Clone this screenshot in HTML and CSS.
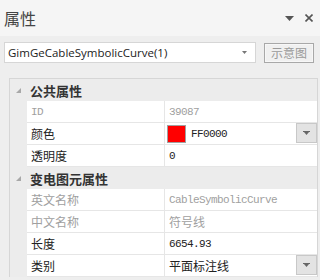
FILE: index.html
```html
<!DOCTYPE html>
<html lang="zh">
<head>
  <meta charset="UTF-8">
  <title>属性</title>
  <link rel="stylesheet" href="styles.css">
</head>
<body>
  <div class="panel">
    <!-- 标题栏 -->
    <div class="header">
      <span class="title">属性</span>
      <div class="header-tools">
        <svg class="pin" width="9" height="5" viewBox="0 0 9 5"><polygon points="0,0 9,0 4.5,5" fill="#555"/></svg>
        <svg class="close" width="8" height="8" viewBox="0 0 8 8"><path d="M0.5 0.5 L7.5 7.5 M7.5 0.5 L0.5 7.5" stroke="#555" stroke-width="1.6"/></svg>
      </div>
    </div>

    <!-- 对象选择 -->
    <div class="toolbar">
      <div class="combo">
        <span>GimGeCableSymbolicCurve(1)</span>
        <svg width="5" height="3" viewBox="0 0 5 3"><polygon points="0,0 5,0 2.5,3" fill="#777"/></svg>
      </div>
      <button class="btn-diagram" disabled>示意图</button>
    </div>

    <!-- 属性表格 -->
    <div class="grid">
      <div class="cat">
        <span class="toggle"><svg width="5" height="5" viewBox="0 0 5 5"><polygon points="5,0 5,5 0,5" fill="#a8a8a8"/></svg></span>
        <span class="cat-name">公共属性</span>
      </div>
      <div class="row readonly">
        <span class="gutter"></span>
        <span class="label mono">ID</span>
        <span class="value mono">39087</span>
      </div>
      <div class="row">
        <span class="gutter"></span>
        <span class="label">颜色</span>
        <span class="value">
          <span class="swatch"></span>
          <span class="mono">FF0000</span>
          <span class="drop"><svg width="7" height="4" viewBox="0 0 7 4"><rect x="0" y="0" width="7" height="1" fill="#666"/><polygon points="1,1 6,1 3.5,4" fill="#666"/></svg></span>
        </span>
      </div>
      <div class="row">
        <span class="gutter"></span>
        <span class="label">透明度</span>
        <span class="value mono">0</span>
      </div>
      <div class="cat">
        <span class="toggle"><svg width="5" height="5" viewBox="0 0 5 5"><polygon points="5,0 5,5 0,5" fill="#a8a8a8"/></svg></span>
        <span class="cat-name">变电图元属性</span>
      </div>
      <div class="row readonly">
        <span class="gutter"></span>
        <span class="label">英文名称</span>
        <span class="value mono">CableSymbolicCurve</span>
      </div>
      <div class="row readonly">
        <span class="gutter"></span>
        <span class="label">中文名称</span>
        <span class="value">符号线</span>
      </div>
      <div class="row">
        <span class="gutter"></span>
        <span class="label">长度</span>
        <span class="value mono">6654.93</span>
      </div>
      <div class="row">
        <span class="gutter"></span>
        <span class="label">类别</span>
        <span class="value">
          平面标注线
          <span class="drop"><svg width="7" height="4" viewBox="0 0 7 4"><rect x="0" y="0" width="7" height="1" fill="#666"/><polygon points="1,1 6,1 3.5,4" fill="#666"/></svg></span>
        </span>
      </div>
    </div>
  </div>
</body>
</html>
```
FILE: styles.css
```css
body {
  margin: 0;
  background: #eeeeee;
  font-family: "Noto Sans CJK SC", sans-serif;
  font-size: 12px;
  color: #333;
}
.panel {
  width: 320px;
  height: 280px;
  overflow: hidden;
}
/* 标题栏 */
.header {
  height: 36px;
  background: #f5f5f5;
  display: flex;
  align-items: center;
  justify-content: space-between;
  padding: 0 7px 0 4px;
}
.title {
  font-size: 16px;
  color: #444;
}
.header-tools {
  display: flex;
  align-items: center;
  gap: 11px;
}
/* 工具栏 */
.toolbar {
  display: flex;
  align-items: center;
  padding: 6px 6px 0 4px;
  gap: 8px;
}
.combo {
  width: 252px;
  height: 21px;
  box-sizing: border-box;
  background: #fff;
  border: 1px solid #d6d6d6;
  display: flex;
  align-items: center;
  justify-content: space-between;
  padding: 0 8px 0 3px;
  font-family: "Open Sans", sans-serif;
  font-size: 11.5px;
  color: #222;
}
.btn-diagram {
  width: 50px;
  height: 20px;
  padding: 0;
  background: #f0f0f0;
  border: 1px solid #a8a8a8;
  box-shadow: inset 0 0 0 1px #f7f7f7;
  font-family: "Noto Sans CJK SC", sans-serif;
  font-size: 12px;
  color: #9a9a9a;
}
/* 属性表格 */
.grid {
  margin: 15px 2px 0 9px;
  border: 1px solid #d6d6d6;
  border-bottom: none;
  background: #ececec;
}
.cat {
  height: 22px;
  display: flex;
  align-items: center;
}
.toggle {
  width: 17px;
  display: flex;
  justify-content: center;
  padding-top: 1px;
}
.cat-name {
  font-size: 13px;
  font-weight: bold;
  color: #333;
  padding-left: 3px;
}
.row {
  display: grid;
  grid-template-columns: 17px 137px 1fr;
  height: 22px;
}
.label,
.value {
  background: #fff;
  border-bottom: 1px solid #e6e6e6;
  display: flex;
  align-items: center;
  padding-left: 4px;
  white-space: nowrap;
  color: #222;
}
.value {
  border-left: 1px solid #e6e6e6;
  position: relative;
  gap: 5px;
  padding-left: 4px;
}
.readonly .label,
.readonly .value {
  color: #a0a0a0;
}
.mono {
  font-family: "Liberation Mono", monospace;
  font-size: 11px;
  letter-spacing: -0.6px;
}
.swatch {
  width: 17px;
  height: 16px;
  background: #ff0000;
  border: 1px solid #a0a0a0;
  margin-left: -2px;
}
.drop {
  position: absolute;
  right: 0;
  top: 0;
  width: 19px;
  height: 18px;
  background: #e3e3e3;
  border: 1px solid #c8c8c8;
  display: flex;
  align-items: center;
  justify-content: center;
}
```
